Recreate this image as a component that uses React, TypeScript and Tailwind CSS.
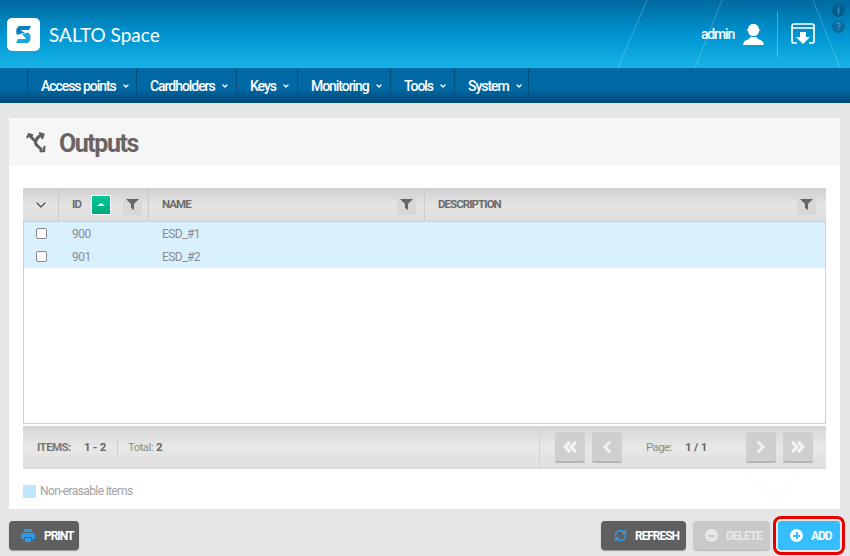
import { ChevronDown, ChevronLeft, ChevronRight, ChevronsLeft, ChevronsRight, RefreshCw } from 'lucide-react'

const menu = [
  { label: 'Access points', width: 'w-[109px]' },
  { label: 'Cardholders', width: 'w-[100px]' },
  { label: 'Keys', width: 'w-[61px]' },
  { label: 'Monitoring', width: 'w-[93px]' },
  { label: 'Tools', width: 'w-[64px]' },
  { label: 'System', width: 'w-[74px]' },
]

const rows = [
  { id: '900', name: 'ESD_#1' },
  { id: '901', name: 'ESD_#2' },
]

const Filter = () => (
  <div className="w-[19px] h-[20px] bg-[#d8d8d8] flex items-center justify-center shrink-0">
    <svg width="13" height="11" viewBox="0 0 13 11">
      <path d="M0 0h13L8 5v6L5 9V5z" fill="#666" />
    </svg>
  </div>
)

const PagerButton: React.FC<{ children: React.ReactNode }> = ({ children }) => (
  <div className="w-[30px] h-[31px] rounded-[3px] bg-[#cfcfcf] border-b-2 border-[#b5b5b5] flex items-center justify-center text-[#f2f2f2]">
    {children}
  </div>
)

export default function App() {
  return (
    <div className="w-[850px] h-[556px] overflow-hidden bg-[#e6e6e6] font-['Roboto',sans-serif]">
      <header className="relative h-[68px] bg-gradient-to-b from-[#006a9f] via-[#0093d0] to-[#16b4e6] flex items-center">
        <svg className="absolute inset-0" width="850" height="68" viewBox="0 0 850 68">
          <path d="M647 0L618 68M722 0L695 68M813 0L840 68" stroke="#fff" strokeOpacity="0.22" fill="none" />
        </svg>
        <div className="relative ml-[7px] w-[33px] h-[33px] bg-white rounded-[5px] flex items-center justify-center">
          <svg width="15" height="17" viewBox="0 0 15 17">
            <path d="M3 0h12l-2 4H6c-1 0-1 1 0 1.300L9 6.500 1 9C-.5 6 0 1.500 3 0z" fill="#0d7fc0" />
            <path d="M6 8l6-1.500c3.500 2 3.500 7.500 0 10.500H0l2-4h7c1 0 1-1 0-1.500z" fill="#18a7de" />
          </svg>
        </div>
        <div className="relative ml-[9px] text-white text-[19px] leading-none font-['Lato',sans-serif]">SALTO Space</div>
        <div className="relative ml-auto flex items-center h-full">
          <span className="text-white text-[14px] font-medium tracking-[-1.2px]">admin</span>
          <svg className="ml-[9px]" width="21" height="21" viewBox="0 0 21 21" fill="#fff">
            <path d="M5 5.500C5 2 7.500 0 10.500 0S16 2 16 5.500l2 .5-2 1c-.2 3-2.500 5-5.500 5S5.200 10 5 7L3 6z" />
            <path d="M7.500 12.500c1.800 1 4.200 1 6 0 .2 1.500 1 2.500 3 3.200 2.500.8 4 1.800 4.300 5.300H.200c.3-3.500 1.800-4.500 4.300-5.300 2-.7 2.800-1.700 3-3.200z" />
          </svg>
          <div className="ml-[13px] w-px h-[46px] bg-white/30" />
          <svg className="ml-[13px] mr-[35px]" width="24" height="22" viewBox="0 0 24 22" fill="none">
            <path d="M6 20H3a2 2 0 0 1-2-2V3a2 2 0 0 1 2-2h18a2 2 0 0 1 2 2v15a2 2 0 0 1-2 2h-3" stroke="#fff" strokeWidth="1.700" />
            <path d="M1 5h22" stroke="#fff" strokeWidth="1.500" />
            <path d="M9 9h6v5h4l-7 7-7-7h4z" fill="#fff" />
          </svg>
          <div className="absolute right-[5px] top-[4px] flex flex-col gap-[3px]">
            <div className="w-[13px] h-[13px] rounded-full bg-[#075c8c] text-[#2a94c8] text-[10px] leading-[13px] font-bold text-center">i</div>
            <div className="w-[13px] h-[13px] rounded-full bg-[#0a6a9c] text-[#2a9ccf] text-[10px] leading-[13px] font-bold text-center">?</div>
          </div>
        </div>
      </header>

      <nav className="h-[35px] pl-[27px] flex bg-gradient-to-b from-[#0068a3] from-[60%] to-[#004a79]">
        {menu.map((item) => (
          <div key={item.label} className={`${item.width} border-l border-[#00507f] flex items-center pt-[1px] pl-[13px] gap-[6px] text-white text-[14px] font-medium tracking-[-1.05px]`}>
            {item.label}
            <ChevronDown size={8} strokeWidth={4} />
          </div>
        ))}
        <div className="border-l border-[#00507f]" />
      </nav>

      <main className="px-[9px] pt-[15px] w-[849px]">
        <div className="h-[48px] bg-[#f6f6f6] flex items-center pl-[17px]">
          <svg width="20" height="21" viewBox="0 0 20 21" fill="none" stroke="#625c5a" strokeWidth="3">
            <path d="M3 3l6.500 6.500" />
            <path d="M0.800 6L3 2l4 1.500" strokeWidth="2.200" />
            <path d="M16 3C10 5 8.500 10.500 10.500 13L16 18" />
            <path d="M13 1l4.500 1.500L16 7" strokeWidth="2.200" />
            <path d="M18.500 14l-.5 5-4.500.5" strokeWidth="2.200" />
          </svg>
          <h1 className="ml-[13px] mt-[3px] text-[25px] leading-none font-bold text-[#6b6462] tracking-[-1.45px]">Outputs</h1>
        </div>

        <section className="relative h-[343px] bg-white px-[14px] pt-[22px]">
          <svg className="absolute right-[29px] bottom-[8px]" width="70" height="32" viewBox="0 0 70 32">
            <path d="M1 1l34 30L59 1" stroke="#f8f8f8" fill="none" />
          </svg>
          <div className="relative h-[236px] w-[803px] border border-[#cfcfcf] border-t-0">
            <div className="h-[34px] -mx-px flex bg-gradient-to-b from-[#cfcfcf] via-[#e4e4e4] to-[#dedede] border-b border-[#cfcfcf] text-[11.500px] font-bold text-[#6b6b6b] tracking-[-0.95px]">
              <div className="w-[36px] border-r border-[#cbcbcb] flex items-center justify-center text-[#555]">
                <ChevronDown size={16} strokeWidth={2} />
              </div>
              <div className="w-[90px] border-r border-[#cbcbcb] flex items-center pl-[13px]">
                <span>ID</span>
                <div className="ml-[10px] w-[20px] h-[20px] bg-gradient-to-b from-[#00c896] to-[#00a97e] border border-white flex items-center justify-center">
                  <div className="w-0 h-0 border-x-[4px] border-x-transparent border-b-[3px] border-b-white" />
                </div>
                <div className="ml-[12px]"><Filter /></div>
              </div>
              <div className="w-[276px] border-r border-[#cbcbcb] flex items-center justify-between pl-[13px] pr-[8px]">
                <span>NAME</span>
                <Filter />
              </div>
              <div className="flex-1 flex items-center justify-between pl-[13px] pr-[10px]">
                <span>DESCRIPTION</span>
                <Filter />
              </div>
            </div>
            {rows.map((row) => (
              <div key={row.id} className="h-[23px] flex items-center bg-[#d9f0ff] text-[12px] text-[#8c8c8c] tracking-[-0.55px]">
                <div className="w-[35px] flex justify-center">
                  <div className="w-[11px] h-[11px] bg-white border border-[#888] rounded-[2px]" />
                </div>
                <div className="w-[90px] pl-[13px]">{row.id}</div>
                <div className="pl-[13px]">{row.name}</div>
              </div>
            ))}
          </div>

          <div className="relative mt-[2px] h-[43px] w-[803px] flex items-center bg-gradient-to-b from-[#d6d6d6] via-[#e8e8e8] to-[#dedede] text-[11.500px] tracking-[-0.6px] whitespace-nowrap">
            <span className="w-[47px] ml-[14px] font-bold text-[#777]">ITEMS:</span>
            <span className="w-[33px] font-bold text-[#666] tracking-[-0.3px]">1 - 2</span>
            <div className="w-px h-[14px] bg-[#cccccc]" />
            <span className="ml-[10px] text-[#8c8c8c]">Total:</span>
            <span className="ml-[3px] font-bold text-[#666]">2</span>
            <div className="absolute left-[516px] h-full border-l border-[#d2d2d2] flex items-center pl-[15px]">
              <PagerButton><ChevronsLeft size={20} strokeWidth={4} /></PagerButton>
              <div className="ml-[7px]"><PagerButton><ChevronLeft size={18} strokeWidth={4} /></PagerButton></div>
              <span className="w-[39px] ml-[24px] text-[#8c8c8c]">Page:</span>
              <span className="w-[61px] font-bold text-[#666] tracking-[-0.2px]">1 / 1</span>
              <PagerButton><ChevronRight size={18} strokeWidth={4} /></PagerButton>
              <div className="ml-[7px]"><PagerButton><ChevronsRight size={20} strokeWidth={4} /></PagerButton></div>
            </div>
          </div>

          <div className="relative mt-[13px] flex items-center text-[12px] text-[#a3a3a3] tracking-[-0.62px]">
            <div className="w-[13px] h-[13px] bg-[#bfe6ff]" />
            <span className="ml-[4px]">Non-erasable items</span>
          </div>
        </section>

        <div className="mt-[12px] flex items-center text-[12px] font-bold tracking-[-1.05px]">
          <button className="w-[70px] h-[29px] rounded-[4px] bg-[#5f5f5f] shadow-[0_1px_1px_rgba(0,0,0,0.35)] text-white flex items-center pl-[12px] gap-[9px]">
            <svg width="14" height="13" viewBox="0 0 14 13" fill="#2f9be8">
              <path d="M3 0h8v3H3zM1.500 4h11A1.500 1.500 0 0 1 14 5.500V10h-3V8H3v2H0V5.500A1.500 1.500 0 0 1 1.500 4zM4 9h6v4H4z" />
            </svg>
            PRINT
          </button>
          <button className="ml-auto w-[85px] h-[29px] rounded-[4px] bg-[#5f5f5f] shadow-[0_1px_1px_rgba(0,0,0,0.35)] text-white flex items-center pl-[13px] gap-[8px]">
            <RefreshCw size={13} strokeWidth={3} className="text-[#2f9be8]" />
            REFRESH
          </button>
          <button className="ml-[7px] w-[77px] h-[29px] rounded-[4px] bg-[#c9c9c9] shadow-[0_1px_1px_rgba(0,0,0,0.2)] text-[#e8e8e8] flex items-center pl-[12px] gap-[8px]">
            <span className="w-[13px] h-[13px] rounded-full bg-[#e8e8e8] flex items-center justify-center">
              <span className="w-[7px] h-[2px] bg-[#c9c9c9]" />
            </span>
            DELETE
          </button>
          <button className="ml-[8px] w-[62px] h-[29px] rounded-[3px] bg-[#36bdfb] text-white flex items-center pl-[12px] gap-[8px] outline-[3px] outline-[#e60000] outline-offset-[2px]">
            <span className="relative w-[13px] h-[13px] rounded-full bg-white flex items-center justify-center">
              <span className="w-[7px] h-[2px] bg-[#36bdfb]" />
              <span className="absolute w-[2px] h-[7px] bg-[#36bdfb]" />
            </span>
            ADD
          </button>
        </div>
      </main>
    </div>
  )
}
